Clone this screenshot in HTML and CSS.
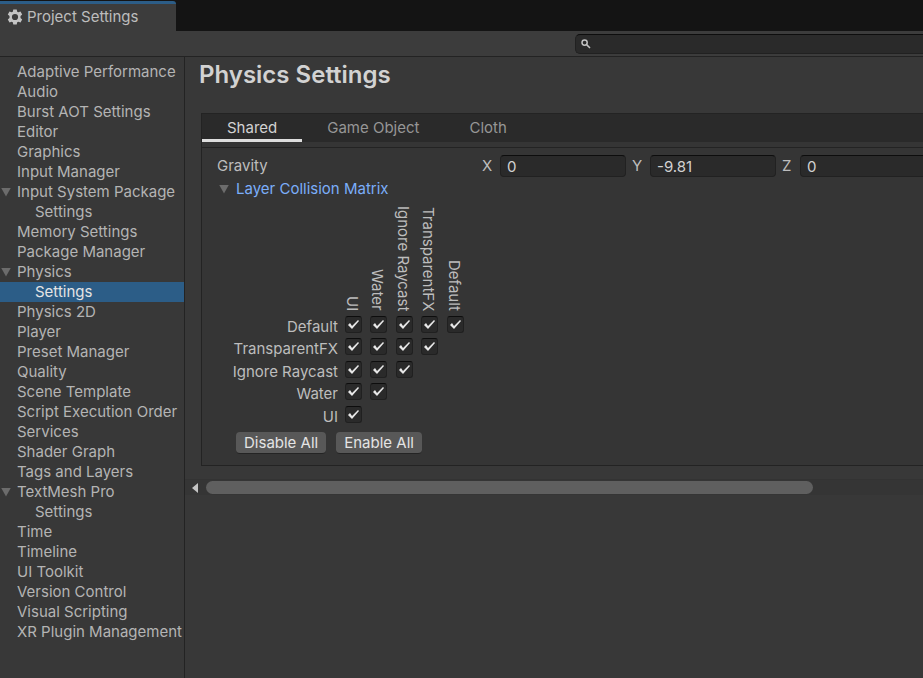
FILE: index.html
```
<!DOCTYPE html>
<html lang="en">
<head>
<meta charset="utf-8">
<title>Project Settings</title>
<link rel="stylesheet" href="styles.css">
</head>
<body>
<header class="tabbar">
  <div class="window-tab">
    <svg class="gear" viewBox="0 0 16 16" aria-hidden="true"><path fill-rule="evenodd" d="M6.3 0.5h3.4l.5 2.2 1.1.6 2.2-.7 1.7 2.9-1.7 1.6v1.8l1.7 1.6-1.7 2.9-2.2-.7-1.1.6-.5 2.2H6.3l-.5-2.2-1.1-.6-2.2.7-1.7-2.9 1.7-1.6V7.1L.8 5.500l1.7-2.900 2.2.7 1.1-.6zM8 4.900a3.100 3.100 0 1 0 0 6.200a3.100 3.100 0 1 0 0-6.200z"/></svg>
    <span>Project Settings</span>
  </div>
</header>
<div class="toolbar">
  <label class="search">
    <svg viewBox="0 0 10 10" aria-hidden="true"><circle cx="3.600" cy="3.600" r="2.600"/><path d="M5.600 5.600 9 9"/></svg>
    <input type="text" aria-label="Search settings">
  </label>
</div>
<div class="body">
  <nav class="sidebar">
    <ul class="tree">
      <li><a href="#">Adaptive Performance</a></li>
      <li><a href="#">Audio</a></li>
      <li><a href="#">Burst AOT Settings</a></li>
      <li><a href="#">Editor</a></li>
      <li><a href="#">Graphics</a></li>
      <li><a href="#">Input Manager</a></li>
      <li><a href="#" class="parent">Input System Package</a></li>
      <li><a href="#" class="child">Settings</a></li>
      <li><a href="#">Memory Settings</a></li>
      <li><a href="#">Package Manager</a></li>
      <li><a href="#" class="parent">Physics</a></li>
      <li><a href="#" class="child selected">Settings</a></li>
      <li><a href="#">Physics 2D</a></li>
      <li><a href="#">Player</a></li>
      <li><a href="#">Preset Manager</a></li>
      <li><a href="#">Quality</a></li>
      <li><a href="#">Scene Template</a></li>
      <li><a href="#">Script Execution Order</a></li>
      <li><a href="#">Services</a></li>
      <li><a href="#">Shader Graph</a></li>
      <li><a href="#">Tags and Layers</a></li>
      <li><a href="#" class="parent">TextMesh Pro</a></li>
      <li><a href="#" class="child">Settings</a></li>
      <li><a href="#">Time</a></li>
      <li><a href="#">Timeline</a></li>
      <li><a href="#">UI Toolkit</a></li>
      <li><a href="#">Version Control</a></li>
      <li><a href="#">Visual Scripting</a></li>
      <li><a href="#">XR Plugin Management</a></li>
    </ul>
  </nav>
  <main class="content">
    <h1>Physics Settings</h1>
    <section class="panel">
      <div class="tabs">
        <button type="button" class="active">Shared</button>
        <button type="button">Game Object</button>
        <button type="button">Cloth</button>
      </div>
      <div class="panel-body">
        <div class="gravity">
          <span class="name">Gravity</span>
          <label for="gx">X</label><input id="gx" type="text" value="0">
          <label for="gy">Y</label><input id="gy" type="text" value="-9.81">
          <label for="gz">Z</label><input id="gz" class="last" type="text" value="0">
        </div>
        <button type="button" class="foldout">Layer Collision Matrix</button>
        <table class="matrix">
          <thead>
            <tr><td></td><th><span>UI</span></th><th><span>Water</span></th><th><span>Ignore Raycast</span></th><th><span>TransparentFX</span></th><th><span>Default</span></th></tr>
          </thead>
          <tbody>
            <tr><th>Default</th><td><input type="checkbox" checked aria-label="Default / UI"></td><td><input type="checkbox" checked aria-label="Default / Water"></td><td><input type="checkbox" checked aria-label="Default / Ignore Raycast"></td><td><input type="checkbox" checked aria-label="Default / TransparentFX"></td><td><input type="checkbox" checked aria-label="Default / Default"></td></tr>
            <tr><th>TransparentFX</th><td><input type="checkbox" checked aria-label="TransparentFX / UI"></td><td><input type="checkbox" checked aria-label="TransparentFX / Water"></td><td><input type="checkbox" checked aria-label="TransparentFX / Ignore Raycast"></td><td><input type="checkbox" checked aria-label="TransparentFX / TransparentFX"></td><td></td></tr>
            <tr><th>Ignore Raycast</th><td><input type="checkbox" checked aria-label="Ignore Raycast / UI"></td><td><input type="checkbox" checked aria-label="Ignore Raycast / Water"></td><td><input type="checkbox" checked aria-label="Ignore Raycast / Ignore Raycast"></td><td></td><td></td></tr>
            <tr><th>Water</th><td><input type="checkbox" checked aria-label="Water / UI"></td><td><input type="checkbox" checked aria-label="Water / Water"></td><td></td><td></td><td></td></tr>
            <tr><th>UI</th><td><input type="checkbox" checked aria-label="UI / UI"></td><td></td><td></td><td></td><td></td></tr>
          </tbody>
        </table>
        <div class="actions">
          <button type="button">Disable All</button>
          <button type="button">Enable All</button>
        </div>
      </div>
    </section>
    <div class="scrollbar">
      <svg viewBox="0 0 6 10" aria-hidden="true"><path d="M6 0v10L0 5z"/></svg>
      <div class="thumb"></div>
    </div>
  </main>
</div>
</body>
</html>
```
FILE: styles.css
```
* { box-sizing: border-box; }

body {
  margin: 0;
  min-height: 100vh;
  display: flex;
  flex-direction: column;
  overflow: hidden;
  background: #383838;
  color: #bdbdbd;
  font: 15px/20px Inter, "Liberation Sans", sans-serif;
}

button, input { font: inherit; color: inherit; }

.tabbar {
  display: flex;
  height: 31px;
  padding-top: 1px;
  background: #141414;
}

.window-tab {
  display: flex;
  align-items: center;
  gap: 4px;
  width: 176px;
  padding: 0 7px 2px;
  border-top: 3px solid #2c5d87;
  border-top-right-radius: 3px;
  background: #3c3c3c;
}

.gear { width: 16px; height: 16px; fill: #c4c4c4; }

.toolbar {
  display: flex;
  justify-content: flex-end;
  height: 26px;
  padding: 3px 0 2px 575px;
  border-bottom: 1px solid #232323;
  background: #3c3c3c;
}

.search {
  display: flex;
  flex: 1;
  align-items: center;
  gap: 6px;
  padding-left: 5px;
  border: 1px solid #212121;
  border-top-color: #0d0d0d;
  border-right: 0;
  border-radius: 5px 0 0 5px;
  background: #2a2a2a;
}

.search svg {
  width: 10px;
  height: 10px;
  fill: none;
  stroke: #c4c4c4;
  stroke-width: 1.5;
}

.search input {
  flex: 1;
  min-width: 0;
  height: 16px;
  padding: 0;
  border: 0;
  outline: 0;
  background: none;
}

.body { display: flex; flex: 1; }

.sidebar {
  flex: 0 0 185px;
  padding-top: 5px;
  border-right: 1px solid #232323;
}

.tree { margin: 0; padding: 0; list-style: none; }

.tree a {
  display: block;
  height: 20px;
  padding-left: 17px;
  color: #b4b4b4;
  text-decoration: none;
  white-space: nowrap;
}

.tree .parent { display: flex; align-items: center; gap: 6px; padding-left: 1px; }
.tree .child { padding-left: 35px; }
.tree .selected { background: #2c5d87; color: #e4e4e4; }

.parent::before, .foldout::before {
  content: "";
  width: 10px;
  height: 9px;
  background: #6c6c6c;
  clip-path: polygon(0 0, 100% 0, 50% 100%);
}

.content { flex: 1; min-width: 0; overflow: hidden; }

h1 {
  margin: 4px 0 24px 14px;
  color: #d2d2d2;
  font-size: 24px;
  font-weight: 600;
  line-height: 28px;
}

.panel {
  margin-left: 16px;
  border: 1px solid #232323;
  border-right: 0;
  background: #353535;
}

.tabs {
  display: flex;
  height: 28px;
  background: #2a2a2a;
}

.tabs button {
  padding: 3px 25px 0;
  border: 0;
  border-bottom: 3px solid transparent;
  background: none;
  color: #969696;
}

.tabs .active { border-bottom-color: #dedede; color: #d2d2d2; }

.panel-body {
  margin-top: 5px;
  padding: 7px 0 11px 15px;
  border-top: 1px solid #232323;
}

.gravity { display: flex; align-items: center; height: 22px; }
.gravity .name { flex: 0 0 259px; }
.gravity label { flex: 0 0 24px; padding-left: 6px; }

.gravity input {
  flex: 0 0 126px;
  min-width: 0;
  height: 22px;
  padding: 0 6px;
  border: 1px solid #212121;
  border-top-color: #0d0d0d;
  border-radius: 4px;
  background: #2a2a2a;
  color: #d2d2d2;
}

.gravity .last {
  flex: 1 1 0;
  border-right: 0;
  border-radius: 4px 0 0 4px;
}

.foldout {
  display: flex;
  align-items: center;
  gap: 7px;
  height: 24px;
  padding: 0 2px;
  border: 0;
  background: none;
  color: #7baefa;
}

.matrix { border-collapse: collapse; table-layout: fixed; width: 255px; }
.matrix th, .matrix td { padding: 0; font-weight: 400; vertical-align: top; }
.matrix tr > :nth-child(even) { width: 25px; }
.matrix tr > :nth-child(odd) { width: 26px; }
.matrix tr > :first-child { width: 128px; }

.matrix thead tr { height: 115px; }
.matrix thead th { padding-bottom: 5px; text-align: left; vertical-align: bottom; }
.matrix thead span {
  display: inline-block;
  line-height: 14px;
  vertical-align: bottom;
  writing-mode: vertical-rl;
  white-space: nowrap;
}

.matrix tbody tr { height: 22px; }
.matrix tbody tr:nth-child(even) { height: 23px; }
.matrix tbody th { padding: 1px 7px 0 0; text-align: right; white-space: nowrap; }

.matrix input {
  display: block;
  width: 17px;
  height: 17px;
  margin: 0;
  appearance: none;
  border: 1px solid #202020;
  border-top-color: #0d0d0d;
  border-radius: 3px;
  background: #2a2a2a;
}

.matrix input:checked::before {
  content: "";
  display: block;
  width: 15px;
  height: 15px;
  background: #e8e8e8;
  clip-path: polygon(2px 8px, 4px 6px, 6px 9px, 12px 3px, 13px 4px, 6px 12px);
}

.actions { display: flex; gap: 10px; padding: 4px 19px 0; }

.actions button {
  height: 22px;
  padding: 0 8px;
  border: 0;
  border-bottom: 1px solid #242424;
  border-radius: 4px;
  background: #585858;
  color: #e4e4e4;
}

.scrollbar {
  display: flex;
  align-items: center;
  gap: 8px;
  height: 16px;
  margin-top: 13px;
  padding-left: 7px;
  border-top: 1px solid #333333;
  background: #353535;
}

.scrollbar svg { width: 6px; height: 10px; fill: #c4c4c4; }
.thumb { flex: 0 0 83%; height: 13px; border-radius: 7px; background: #5f5f5f; }
```
